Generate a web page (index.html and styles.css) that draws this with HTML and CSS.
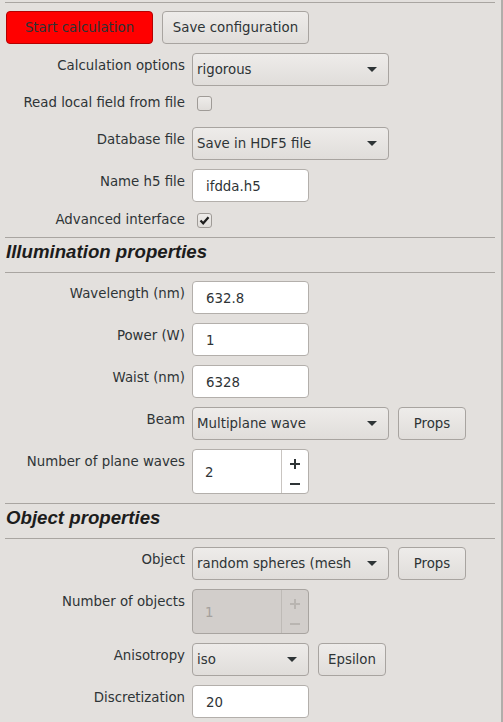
FILE: index.html
```html
<!DOCTYPE html>
<html>
<head>
<meta charset="utf-8">
<link rel="stylesheet" href="styles.css">
</head>
<body>
<div class="panel">
  <div class="sep sep-top"></div>
  <div class="group group-first">
    <div class="actions">
      <button class="btn btn-wide btn-start">Start calculation</button>
      <button class="btn btn-wide">Save configuration</button>
    </div>
    <div class="row">
      <div class="lbl">Calculation options</div>
      <div class="combo w-wide"><span>rigorous</span><svg class="arrow" width="10" height="5" viewBox="0 0 10 5"><polygon points="0,0 10,0 5,5"/></svg></div>
    </div>
    <div class="row row-check">
      <div class="lbl">Read local field from file</div>
      <div class="check"></div>
    </div>
    <div class="row">
      <div class="lbl">Database file</div>
      <div class="combo w-wide"><span>Save in HDF5 file</span><svg class="arrow" width="10" height="5" viewBox="0 0 10 5"><polygon points="0,0 10,0 5,5"/></svg></div>
    </div>
    <div class="row">
      <div class="lbl">Name h5 file</div>
      <div class="entry">ifdda.h5</div>
    </div>
    <div class="row row-check row-adv">
      <div class="lbl">Advanced interface</div>
      <div class="check"><svg width="13" height="13" viewBox="0 0 13 13"><path d="M2.5 6.5 L5.2 9.3 L10.5 3.2" fill="none" stroke="#1e1e1e" stroke-width="2.2"/></svg></div>
    </div>
  </div>
  <div class="sep sep-before"></div>
  <div class="heading">Illumination properties</div>
  <div class="sep"></div>
  <div class="group">
    <div class="row">
      <div class="lbl">Wavelength (nm)</div>
      <div class="entry">632.8</div>
    </div>
    <div class="row">
      <div class="lbl">Power (W)</div>
      <div class="entry">1</div>
    </div>
    <div class="row">
      <div class="lbl">Waist (nm)</div>
      <div class="entry">6328</div>
    </div>
    <div class="row">
      <div class="lbl">Beam</div>
      <div class="fields">
        <div class="combo w-wide"><span>Multiplane wave</span><svg class="arrow" width="10" height="5" viewBox="0 0 10 5"><polygon points="0,0 10,0 5,5"/></svg></div>
        <button class="btn btn-small">Props</button>
      </div>
    </div>
    <div class="row">
      <div class="lbl">Number of plane waves</div>
      <div class="spin">
        <div class="spin-val">2</div>
        <div class="spin-btns"><svg width="26" height="43" viewBox="0 0 26 43"><path d="M8 14 H18 M13 9 V19 M8 34 H18" stroke="#2e3436" stroke-width="2" fill="none"/></svg></div>
      </div>
    </div>
  </div>
  <div class="sep sep-before"></div>
  <div class="heading">Object properties</div>
  <div class="sep"></div>
  <div class="group">
    <div class="row">
      <div class="lbl">Object</div>
      <div class="fields">
        <div class="combo w-wide"><span>random spheres (mesh</span><svg class="arrow" width="10" height="5" viewBox="0 0 10 5"><polygon points="0,0 10,0 5,5"/></svg></div>
        <button class="btn btn-small">Props</button>
      </div>
    </div>
    <div class="row">
      <div class="lbl">Number of objects</div>
      <div class="spin spin-disabled">
        <div class="spin-val">1</div>
        <div class="spin-btns"><svg width="26" height="43" viewBox="0 0 26 43"><path d="M8 14 H18 M13 9 V19 M8 34 H18" stroke="#b9b5b1" stroke-width="2" fill="none"/></svg></div>
      </div>
    </div>
    <div class="row">
      <div class="lbl">Anisotropy</div>
      <div class="fields">
        <div class="combo w-narrow"><span>iso</span><svg class="arrow" width="10" height="5" viewBox="0 0 10 5"><polygon points="0,0 10,0 5,5"/></svg></div>
        <button class="btn btn-small">Epsilon</button>
      </div>
    </div>
    <div class="row">
      <div class="lbl">Discretization</div>
      <div class="entry">20</div>
    </div>
  </div>
</div>
</body>
</html>
```
FILE: styles.css
```css
* { box-sizing: border-box; }
html, body { margin: 0; height: 100%; }
body {
  background: #e3e0dd;
  font-family: "DejaVu Sans", sans-serif;
  font-size: 13.33px;
  color: #2e3436;
  overflow: hidden;
}
.panel {
  width: 503px;
  min-height: 100%;
  border-right: 2px solid #b1adaa;
  padding-top: 2px;
}
.sep {
  height: 1px;
  width: 490px;
  margin-left: 5px;
  background: #a9a5a1;
}
.sep-before { margin-top: 9px; }
.group {
  display: flex;
  flex-direction: column;
  gap: 9px;
  padding-top: 8px;
}
.actions {
  display: flex;
  gap: 9px;
  padding-left: 6px;
}
.row {
  display: flex;
  align-items: flex-start;
}
.lbl {
  width: 185px;
  margin-right: 7px;
  text-align: right;
  white-space: nowrap;
  line-height: 15px;
  padding-top: 5px;
}
.row-check { height: 23px; }
.row-check .lbl { padding-top: 0; }
.row-adv { height: 17px; }
.row-adv .lbl { padding-top: 1px; }
.fields {
  display: flex;
  gap: 9px;
}
.btn {
  height: 33px;
  border: 1px solid #a8a4a0;
  border-radius: 4px;
  background: linear-gradient(#eeecea, #e0ddda);
  font-family: inherit;
  font-size: 13.33px;
  color: #2e3436;
  padding: 0;
  margin: 0;
}
.btn-wide { width: 147px; }
.btn-small { width: 68px; }
.btn-start {
  background: #ff0000;
  border-color: #b50000;
}
.combo {
  height: 33px;
  border: 1px solid #a8a4a0;
  border-radius: 4px;
  background: linear-gradient(#eeecea, #e0ddda);
  display: flex;
  align-items: center;
  justify-content: space-between;
  padding: 0 11px 0 4px;
  line-height: 31px;
  white-space: nowrap;
}
.w-wide { width: 197px; }
.w-narrow { width: 117px; }
.arrow { fill: #2e3436; flex: none; }
.entry {
  width: 117px;
  height: 33px;
  border: 1px solid #b3afab;
  border-radius: 4px;
  background: #ffffff;
  padding: 2px 0 0 13px;
  line-height: 29px;
}
.spin {
  width: 117px;
  height: 45px;
  border: 1px solid #b3afab;
  border-radius: 4px;
  background: #ffffff;
  display: flex;
}
.spin-val {
  flex: 1;
  padding: 2px 0 0 12px;
  line-height: 41px;
}
.spin-btns {
  width: 27px;
  border-left: 1px solid #c9c5c1;
}
.spin-btns svg { display: block; }
.spin-disabled {
  background: #d2cecb;
  border-color: #a8a4a0;
  color: #a5a19d;
}
.spin-disabled .spin-btns { border-left-color: #bebab6; }
.check {
  width: 15px;
  height: 15px;
  margin: 1px 0 0 5px;
  border: 1px solid #9f9b97;
  border-radius: 3px;
  background: linear-gradient(#eeecea, #e0ddda);
}
.check svg { display: block; }
.row-adv .check { margin-top: 2px; }
.heading {
  font-family: "Liberation Sans", Arial, sans-serif;
  font-weight: bold;
  font-style: italic;
  font-size: 18.67px;
  line-height: 20px;
  height: 34px;
  padding: 4px 0 0 6px;
  color: #1c1c1c;
}
```
